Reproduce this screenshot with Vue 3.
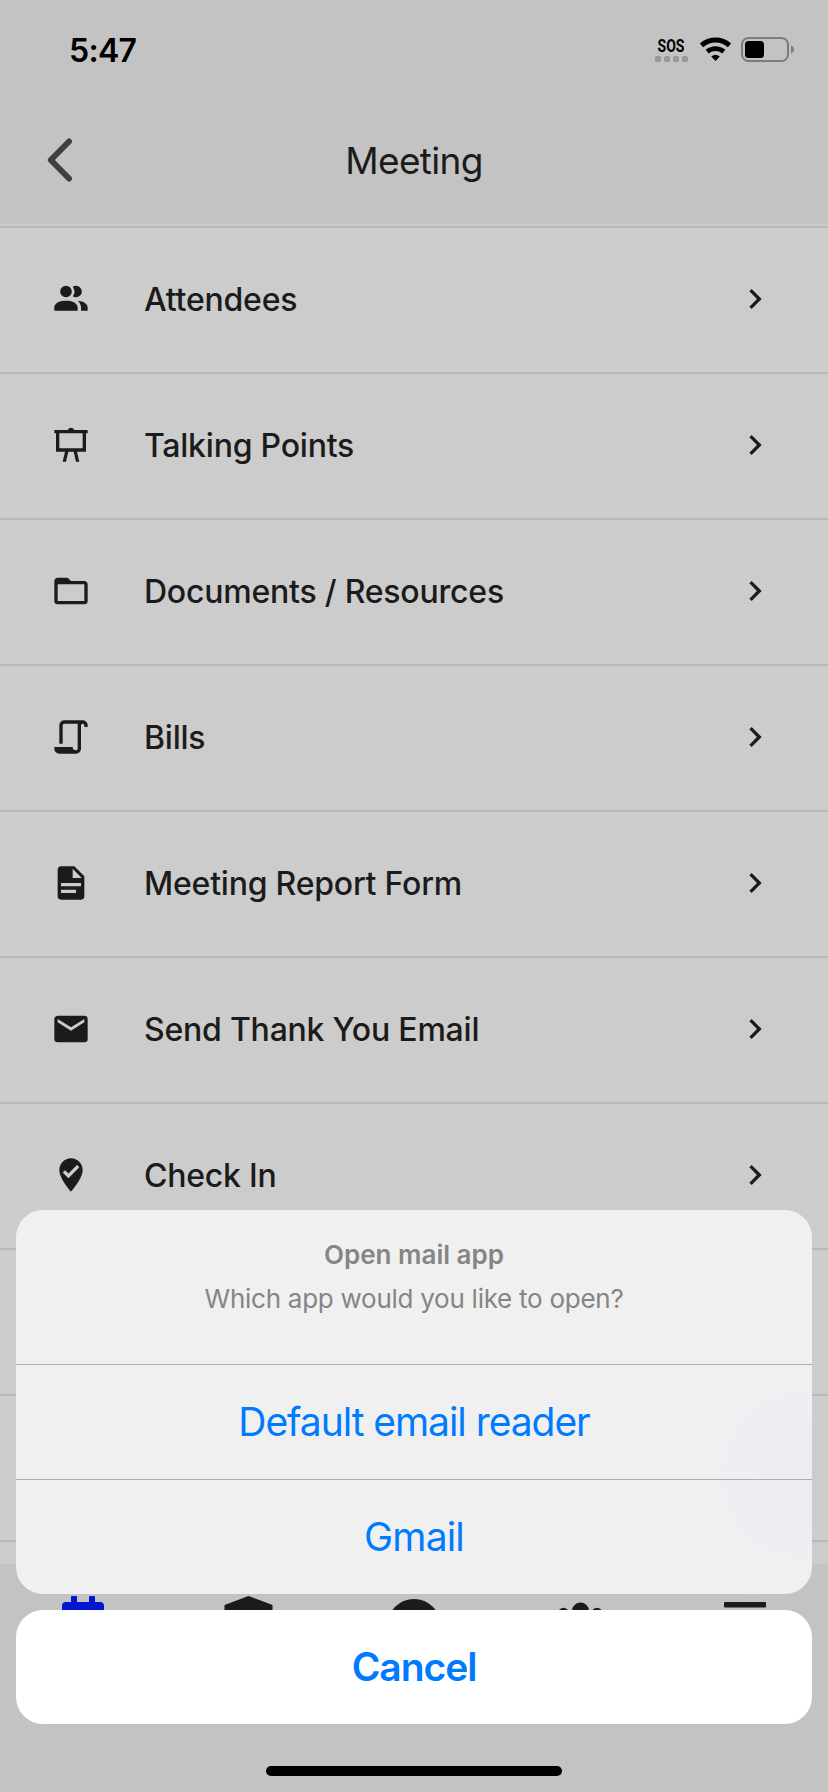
<template>
    <div class="screen">
        <header class="header">
            <div class="status_bar">
                <span class="time">5:47</span>
                <svg class="status_icons" viewBox="0 0 142 30">
                    <text x="5.500" y="17.300" class="sos" textLength="27" lengthAdjust="spacingAndGlyphs">SOS</text>
                    <g fill="#989898">
                        <rect x="3" y="21" width="6" height="6" rx="1.8" />
                        <rect x="12" y="21" width="6" height="6" rx="1.8" />
                        <rect x="21" y="21" width="6" height="6" rx="1.8" />
                        <rect x="30" y="21" width="6" height="6" rx="1.8" />
                    </g>
                    <path d="M49.500 10.300a21 21 0 0 1 28 0" fill="none" stroke="#000" stroke-width="5" />
                    <path d="M55.200 16.700a13 13 0 0 1 16.600 0" fill="none" stroke="#000" stroke-width="4.800" />
                    <path d="M59.200 21.400a7 7 0 0 1 8.600 0L63.500 26z" />
                    <rect x="90" y="3" width="46" height="23" rx="6.500" fill="none" stroke="#7c7c7c" stroke-width="2" />
                    <rect x="93" y="6" width="19" height="17" rx="3.500" />
                    <path d="M139 10.500c4 1.500 4 6.500 0 8z" fill="#7c7c7c" />
                </svg>
            </div>
            <div class="nav_bar">
                <svg class="back" viewBox="0 0 28 46">
                    <path d="M24 4.500L5.800 23L24 41.500" />
                </svg>
                <h1>Meeting</h1>
            </div>
        </header>

        <ul class="menu">
            <li v-for="item in items" :key="item.label">
                <svg class="icon" viewBox="0 0 24 24"><path :d="item.icon" /></svg>
                <span class="label">{{ item.label }}</span>
                <svg class="icon" viewBox="0 0 24 24">
                    <path d="M8.590 16.580L13.170 12 8.590 7.410 10 6l6 6-6 6-1.410-1.420z" />
                </svg>
            </li>
            <li></li>
            <li></li>
        </ul>

        <nav class="tab_bar">
            <svg class="active" viewBox="0 0 60 48">
                <path d="M9 10a4 4 0 0 1 4-4h5V1q0-1 1-1h4q1 0 1 1v5h12V1q0-1 1-1h4q1 0 1 1v5h5a4 4 0 0 1 4 4v34a4 4 0 0 1-4 4H13a4 4 0 0 1-4-4z" />
            </svg>
            <svg viewBox="0 0 60 48"><path d="M6.500 9l24-9 24 9v39h-48z" /></svg>
            <svg viewBox="0 0 60 60"><circle cx="30" cy="30" r="27" /></svg>
            <svg viewBox="0 0 60 48">
                <circle cx="30.500" cy="15" r="8.500" />
                <circle cx="13.500" cy="17" r="5.300" />
                <circle cx="47" cy="17" r="5.300" />
            </svg>
            <svg viewBox="0 0 60 48">
                <rect x="9" y="6" width="42" height="5.500" rx="1" />
                <rect x="9" y="20" width="42" height="5.500" rx="1" />
                <rect x="9" y="34" width="42" height="5.500" rx="1" />
            </svg>
        </nav>

        <!-- 메일 앱 선택 시트 -->
        <div class="sheet">
            <div class="options">
                <div class="message">
                    <strong>Open mail app</strong>
                    <p>Which app would you like to open?</p>
                </div>
                <button class="reader">Default email reader</button>
                <button class="gmail">Gmail</button>
            </div>
            <button class="cancel">Cancel</button>
            <div class="home_indicator"></div>
        </div>
    </div>
</template>

<script setup>
    const items = [
        { label: 'Attendees', icon: 'M16 17v2H2v-2s0-4 7-4 7 4 7 4m-3.500-9.500A3.500 3.500 0 1 0 9 11a3.500 3.500 0 0 0 3.500-3.500m3.440 5.500A5.320 5.320 0 0 1 18 17v2h4v-2s0-3.630-6.060-4M15 4a3.400 3.400 0 0 0-1.930.590 5 5 0 0 1 0 5.820A3.400 3.400 0 0 0 15 11a3.500 3.500 0 0 0 0-7z' },
        { label: 'Talking Points', icon: 'M10.100 3a2 2 0 0 1 3.800 0H22v2h-1v11h-5.400L17 22h-2l-1.400-6h-3.200L9 22H7l1.400-6H3V5H2V3zM5 5v9h14V5z' },
        { label: 'Documents / Resources', icon: 'M20 18H4V8h16m0-2h-8l-2-2H4c-1.110 0-2 .890-2 2v12a2 2 0 0 0 2 2h16a2 2 0 0 0 2-2V8c0-1.110-.890-2-2-2z' },
        { label: 'Bills', icon: 'M15 20a1 1 0 0 0 1-1V4H8a1 1 0 0 0-1 1v11H5V5a3 3 0 0 1 3-3h11a3 3 0 0 1 3 3v1h-2V5a1 1 0 0 0-1-1 1 1 0 0 0-1 1v14a3 3 0 0 1-3 3H5a3 3 0 0 1-3-3v-1h11a2 2 0 0 0 2 2z' },
        { label: 'Meeting Report Form', icon: 'M13 9h5.500L13 3.500V9M6 2h8l6 6v12a2 2 0 0 1-2 2H6a2 2 0 0 1-2-2V4c0-1.110.890-2 2-2m9 16v-2H6v2h9m3-4v-2H6v2h12z' },
        { label: 'Send Thank You Email', icon: 'M20 8l-8 5-8-5V6l8 5 8-5m0-2H4c-1.110 0-2 .890-2 2v12a2 2 0 0 0 2 2h16a2 2 0 0 0 2-2V6a2 2 0 0 0-2-2z' },
        { label: 'Check In', icon: 'M12 2C8.140 2 5 5.140 5 9c0 5.250 7 13 7 13s7-7.750 7-13c0-3.860-3.140-7-7-7M10.470 14L7 10.500l1.400-1.410 2.070 2.080L15.600 6 17 7.410 10.470 14z' }
    ]
</script>

<style>
    body {
        margin: 0;
    }
</style>

<style scoped>
    .screen {
        position: relative;
        width: 828px;
        height: 1792px;
        overflow: hidden;
        display: flex;
        flex-direction: column;
        background-color: #cccccc;
        color: #1b1b1b;
        font-family: Inter, 'Liberation Sans', sans-serif;
    }

    .header {
        height: 224px;
        padding-bottom: 2px;
        border-bottom: 2px solid #b8b8b8;
        background: linear-gradient(#c3c3c3 224px, #cccccc 224px);
    }

    .status_bar {
        height: 98px;
        box-sizing: border-box;
        padding: 0 32px 0 69px;
        display: flex;
        align-items: center;
        justify-content: space-between;
    }

    .time {
        color: #000;
        font-size: 32px;
        font-weight: 600;
        line-height: 40px;
        letter-spacing: -0.700px;
        padding-top: 3px;
    }

    .status_icons {
        width: 142px;
        height: 30px;
        padding-top: 1px;
        margin-right: 2px;
    }

    .sos {
        font-family: Roboto, sans-serif;
        font-size: 19px;
        font-weight: 700;
    }

    .nav_bar {
        height: 124px;
        display: grid;
        grid-template-columns: 28px 1fr 28px;
        align-items: center;
        padding: 0 45px;
    }

    .back {
        width: 28px;
        height: 46px;
    }

    .back path {
        fill: none;
        stroke: #404040;
        stroke-width: 6;
        stroke-linecap: round;
        stroke-linejoin: round;
    }

    .nav_bar h1 {
        margin: 0;
        text-align: center;
        font-size: 37px;
        font-weight: 400;
        letter-spacing: -0.700px;
    }

    .menu {
        height: 1336px;
        margin: 0;
        padding: 0;
        list-style: none;
    }

    .menu li {
        height: 146px;
        box-sizing: border-box;
        padding: 0 53px 2px 51px;
        border-bottom: 2px solid #b8b8b8;
        display: flex;
        align-items: center;
    }

    .icon {
        width: 40px;
        height: 40px;
        fill: #1b1b1b;
    }

    .label {
        flex: 1;
        padding-left: 53px;
        font-size: 32px;
        font-weight: 500;
        letter-spacing: -0.220px;
    }

    .tab_bar {
        height: 228px;
        box-sizing: border-box;
        padding-top: 32px;
        display: grid;
        grid-template-columns: repeat(5, 1fr);
        justify-items: center;
        align-items: start;
        background-color: #c3c3c3;
    }

    .tab_bar svg {
        width: 60px;
        fill: #1b1b1b;
    }

    .tab_bar .active {
        fill: #0016d0;
    }

    .sheet {
        position: absolute;
        left: 16px;
        right: 16px;
        bottom: 16px;
        display: flex;
        flex-direction: column;
        align-items: center;
    }

    .options {
        width: 100%;
        height: 384px;
        border-radius: 27px;
        overflow: hidden;
        background: radial-gradient(circle at 790px 265px, #ecedf3 0, #eeeff2 70px, #f0f0f0 150px);
    }

    .message {
        height: 154px;
        box-sizing: border-box;
        padding-top: 26px;
        text-align: center;
        color: #858585;
        font-size: 26px;
        line-height: 38px;
    }

    .message strong {
        display: block;
        font-weight: 600;
    }

    .message p {
        margin: 6px 0 0;
        letter-spacing: -0.260px;
    }

    button {
        display: block;
        width: 100%;
        padding: 0 0 2px;
        border: 0;
        background: none;
        color: #007aff;
        font-family: inherit;
        font-size: 39px;
    }

    .options button {
        height: 115px;
        border-top: 1px solid #adadaf;
    }

    .reader {
        letter-spacing: -1.050px;
    }

    .gmail {
        letter-spacing: -0.800px;
    }

    .cancel {
        height: 114px;
        margin-top: 16px;
        border-radius: 27px;
        background-color: #fff;
        font-weight: 600;
        letter-spacing: -1.050px;
    }

    .home_indicator {
        width: 296px;
        height: 10px;
        margin-top: 42px;
        border-radius: 5px;
        background-color: #000;
    }
</style>
